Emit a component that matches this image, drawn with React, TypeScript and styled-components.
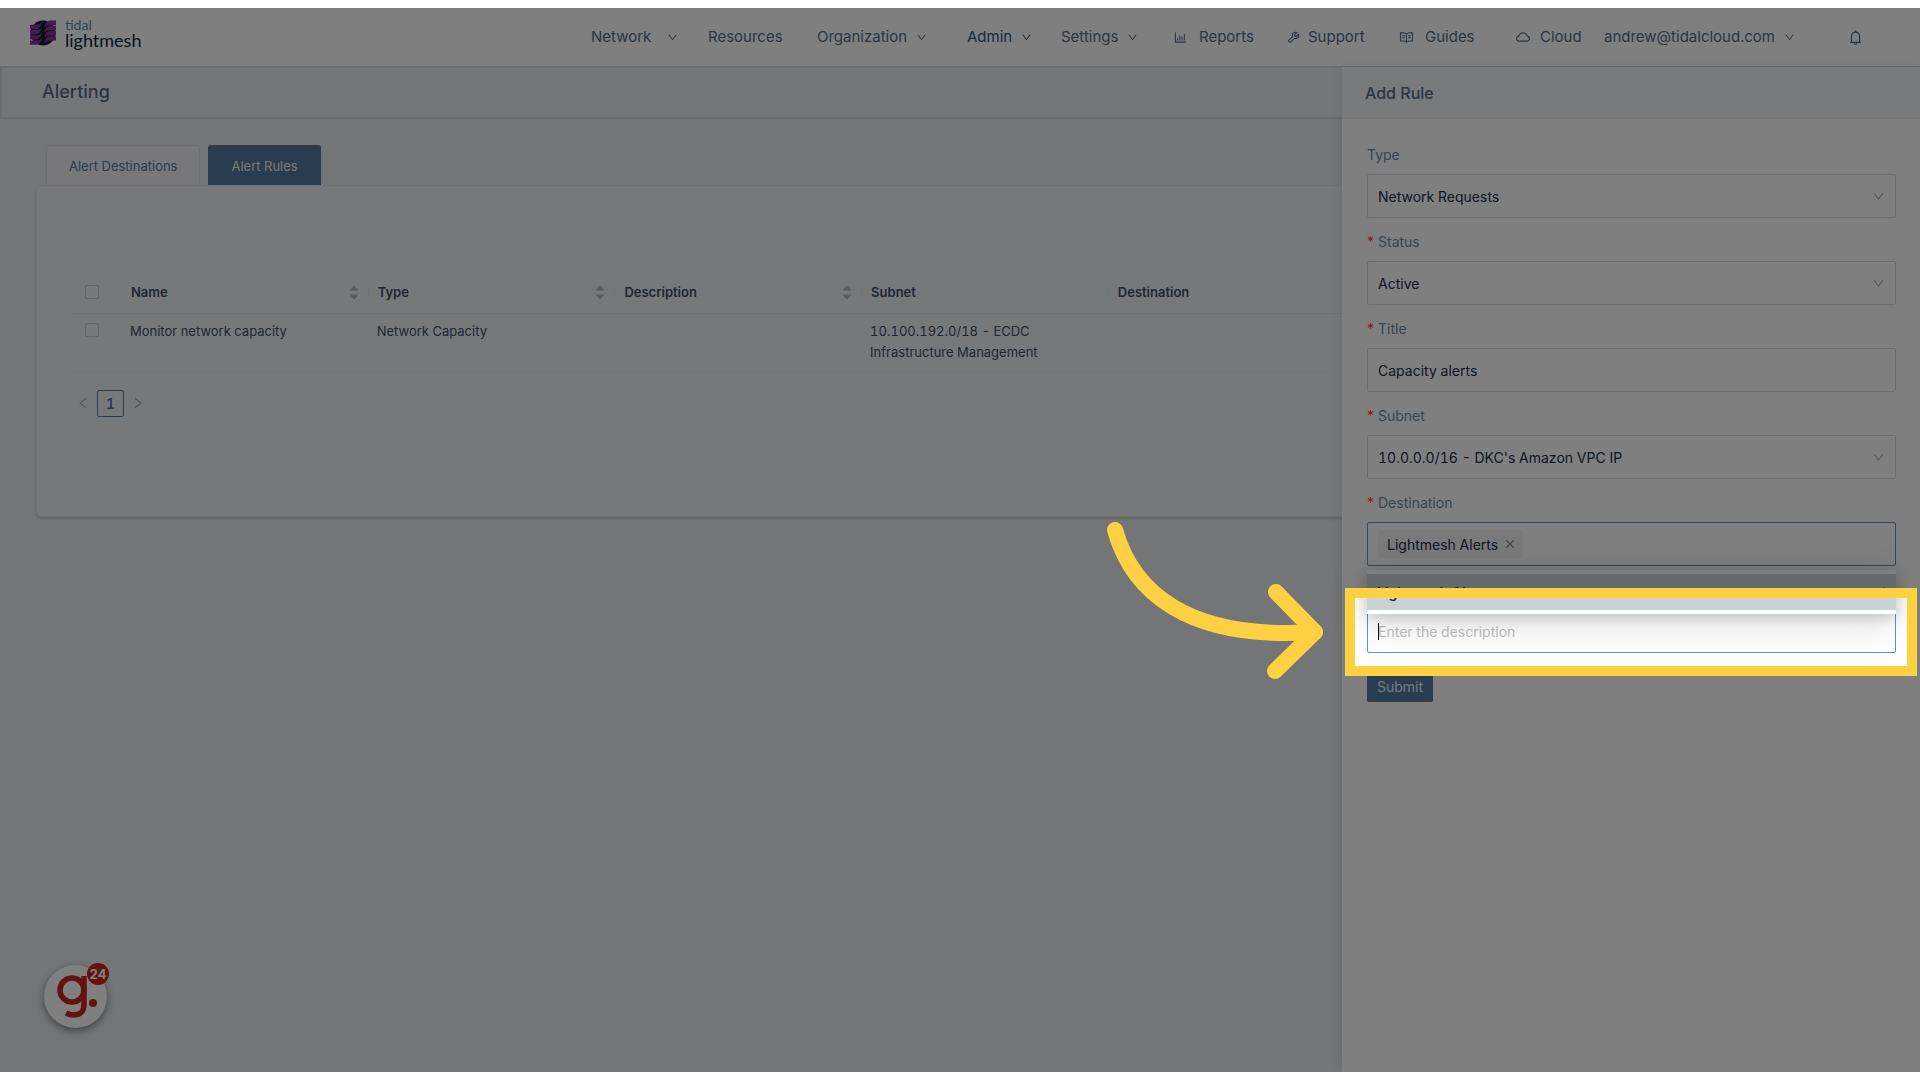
import React from 'react';
import styled, { createGlobalStyle } from 'styled-components';
import {
  AiFillCaretDown, AiFillCaretUp,
  AiOutlineBarChart, AiOutlineBell, AiOutlineCheck, AiOutlineClose, AiOutlineCloud,
  AiOutlineDown, AiOutlineLeft, AiOutlineRead, AiOutlineRight, AiOutlineTool,
} from 'react-icons/ai';

const sans = "Inter, 'Liberation Sans', sans-serif";
const color = {
  ink: '#1e2c44',
  slate: '#586b84',
  heading: '#5a6b85',
  label: '#7288a4',
  blue: '#54789f',
  line: '#d3dae3',
  accent: '#ffd142',
};

const GlobalStyle = createGlobalStyle`
  *, *::before, *::after { box-sizing: border-box; }
  body {
    margin: 0;
    background: #fff;
    font-family: ${sans};
    font-size: 14px;
    font-variant-numeric: tabular-nums;
    color: ${color.ink};
  }
  button, input, select { font: inherit; color: inherit; }
  a { color: inherit; text-decoration: none; }
`;

const Page = styled.div`
  min-height: 100vh;
  padding: 8px 0;
  display: flex;
`;

const Stage = styled.div`
  position: relative;
  flex: 1;
  min-width: 0;
  display: flex;
  flex-direction: column;
  overflow: hidden;
  background: #e9ebee;
`;

const Header = styled.header`
  height: 58px;
  padding: 0 56px 0 30px;
  display: flex;
  align-items: center;
  justify-content: space-between;
  background: #fff;
`;

const Brand = styled.a`
  padding-bottom: 8px;
  display: flex;
  align-items: center;
  gap: 9px;
`;

const BrandName = styled.span`
  display: flex;
  flex-direction: column;
  font-family: Lato, ${sans};
`;

const BrandTop = styled.span`
  font-size: 14px;
  line-height: 14px;
  color: #4a90ac;
`;

const BrandMain = styled.span`
  font-size: 18px;
  line-height: 16px;
  color: #10283a;
`;

const Nav = styled.nav`
  display: flex;
  align-items: center;
  font-size: 15px;
  line-height: 20px;
  color: ${color.slate};
`;

const NavItem = styled.a<{ $width: number; $active?: boolean; $gap?: number }>`
  width: ${p => p.$width}px;
  display: flex;
  align-items: center;
  gap: ${p => p.$gap ?? 9}px;
  white-space: nowrap;
  color: ${p => (p.$active ? '#2f547e' : 'inherit')};
`;

const Bell = styled.button`
  padding: 0;
  border: 0;
  background: none;
  display: flex;
  font-size: 17px;
`;

const TitleBar = styled.div`
  height: 53px;
  padding: 0 40px 2px;
  display: flex;
  align-items: center;
  border: 2px solid #d5d8e4;
  background: #ebedf0;
`;

const Title = styled.h1`
  margin: 0;
  font-size: 18px;
  line-height: 24px;
  font-weight: 500;
  color: ${color.heading};
`;

const Main = styled.main`
  padding: 26px 36px;
`;

const Tabs = styled.div`
  display: flex;
  gap: 8px;
  padding-left: 10px;
`;

const Tab = styled.button<{ $active?: boolean }>`
  height: 40px;
  padding: 0 22px;
  border: 1px solid ${p => (p.$active ? color.blue : '#d9dce1')};
  border-bottom: 0;
  border-radius: 3px 3px 0 0;
  background: ${p => (p.$active ? color.blue : '#f0f1f4')};
  color: ${p => (p.$active ? '#eef2f6' : color.blue)};
  font-size: 13px;
`;

const Card = styled.section`
  min-height: 332px;
  padding: 86px 34px 0;
  border: 1px solid #dfe1e4;
  border-radius: 6px;
  background: #eff0f3;
  box-shadow: 0 2px 3px rgba(0, 0, 0, 0.16);
`;

const Table = styled.table`
  width: 100%;
  table-layout: fixed;
  border-collapse: collapse;
  font-size: 13px;
  line-height: 21px;
  color: #3f4f68;
`;

const Th = styled.th`
  height: 41px;
  padding: 0 0 0 9px;
  text-align: left;
  font-weight: 600;
  border-bottom: 1px solid #e2e4e8;
`;

const CheckTh = styled(Th)`
  width: 51px;
  padding-left: 14px;
`;

const HeadCell = styled.div<{ $divided?: boolean }>`
  height: 14px;
  padding-right: 8px;
  display: flex;
  align-items: center;
  justify-content: space-between;
  border-right: ${p => (p.$divided ? '1px solid #e6e8eb' : '0')};
`;

const Sorter = styled.span`
  display: flex;
  flex-direction: column;
  font-size: 12px;
  color: #b3b5b9;
  svg { display: block; }
  svg + svg { margin-top: -3px; }
`;

const Td = styled.td`
  padding: 7px 40px 8px 8px;
  vertical-align: top;
  border-bottom: 1px solid #e9ebee;
`;

const CheckTd = styled(Td)`
  padding: 9px 0 0 14px;
`;

const Tick = styled.input`
  appearance: none;
  display: block;
  width: 14px;
  height: 14px;
  margin: 0;
  border: 1px solid #c6cad0;
  border-radius: 2px;
`;

const Pager = styled.nav`
  margin-top: 18px;
  padding-left: 5px;
  display: flex;
  align-items: center;
  gap: 7px;
  color: #a6a9af;
`;

const PageStep = styled.button`
  padding: 0;
  border: 0;
  background: none;
  display: flex;
  font-size: 14px;
`;

const PageNumber = styled.button`
  width: 27px;
  height: 27px;
  padding: 0;
  border: 1px solid ${color.blue};
  border-radius: 2px;
  background: none;
  color: ${color.blue};
  font-weight: 600;
`;

const Drawer = styled.aside`
  position: absolute;
  top: 59px;
  right: 0;
  bottom: 0;
  width: 578px;
  background: #fff;
  box-shadow: -3px 0 10px rgba(0, 0, 0, 0.08);
`;

const DrawerHead = styled.div`
  height: 52px;
  padding: 0 23px;
  display: flex;
  align-items: center;
  background: #f2f4f7;
  border-bottom: 1px solid #e6e9ed;
`;

const DrawerTitle = styled.h2`
  margin: 0;
  font-size: 16px;
  line-height: 24px;
  font-weight: 500;
  color: ${color.heading};
`;

const Form = styled.form`
  padding: 24px 24px 24px 25px;
`;

const Field = styled.div`
  position: relative;
  display: grid;
  grid-template-rows: 31px 44px;
  padding-bottom: 12px;
`;

const Label = styled.label`
  line-height: 24px;
  color: ${color.label};
`;

const Star = styled.span`
  margin-right: 4px;
  font-variant-numeric: normal;
  color: #f5403c;
`;

const Control = styled.div<{ $focus?: boolean }>`
  grid-row: 2;
  position: relative;
  padding: 0 10px;
  display: flex;
  align-items: center;
  border: 1px solid ${p => (p.$focus ? '#6d8fb3' : color.line)};
  border-radius: 2px;
  background: #fff;
`;

const Select = styled.select`
  appearance: none;
  flex: 1;
  min-width: 0;
  padding: 0;
  border: 0;
  background: none;
  outline: none;
`;

const TextInput = styled.input`
  flex: 1;
  min-width: 0;
  padding: 0;
  border: 0;
  background: none;
  outline: none;
  &::placeholder { color: #bfbfbf; opacity: 1; }
`;

const Arrow = styled(AiOutlineDown)`
  flex: none;
  color: #a9abaf;
  font-size: 13px;
`;

const Tag = styled.span`
  height: 28px;
  padding: 0 7px 0 9px;
  display: flex;
  align-items: center;
  gap: 6px;
  border-radius: 2px;
  background: #f4f4f5;
`;

const TagRemove = styled.button`
  padding: 0;
  border: 0;
  background: none;
  display: flex;
  font-size: 12px;
  color: #75787c;
`;

const Caret = styled.span`
  position: absolute;
  left: 10px;
  width: 1px;
  height: 17px;
  background: #111;
`;

const Dropdown = styled.div`
  position: absolute;
  z-index: 1;
  top: 79px;
  left: 0;
  right: 0;
  padding: 4px 0;
  background: #fff;
  box-shadow: 0 3px 16px rgba(0, 0, 0, 0.22), 0 9px 48px rgba(0, 0, 0, 0.12);
`;

const Option = styled.div`
  height: 36px;
  padding: 0 10px;
  display: flex;
  align-items: center;
  justify-content: space-between;
  background: #cad2d6;
  font-weight: 600;
`;

const Submit = styled.button`
  height: 32px;
  margin-top: 5px;
  padding: 0 10px;
  border: 0;
  border-radius: 2px;
  background: ${color.blue};
  color: #eef2f6;
`;

const Chat = styled.button`
  position: absolute;
  left: 44px;
  bottom: 44px;
  width: 63px;
  height: 63px;
  padding: 0;
  border: 0;
  border-radius: 50%;
  background: #fff;
  box-shadow: 0 3px 8px rgba(0, 0, 0, 0.45);
`;

const Count = styled.span`
  position: absolute;
  top: -2px;
  right: -2px;
  width: 22px;
  height: 22px;
  border-radius: 50%;
  background: #c7261a;
  color: #fff;
  font-size: 13px;
  line-height: 22px;
  font-weight: 700;
`;

/* The frame shades everything on the stage outside its own box. */
const Spotlight = styled.div`
  position: absolute;
  z-index: 3;
  top: 580px;
  right: 3px;
  width: 572px;
  height: 88px;
  border: 10px solid ${color.accent};
  box-shadow: 0 0 0 3000px rgba(0, 0, 0, 0.5);
  pointer-events: none;
`;

const Pointer = styled.svg`
  position: absolute;
  z-index: 4;
  top: 510px;
  right: 590px;
  width: 230px;
  height: 170px;
  pointer-events: none;
`;

const Logo = () => (
  <svg width="26" height="26" viewBox="0 0 26 26" aria-hidden="true">
    <circle cx="13" cy="13" r="12.5" fill="#0c1c30" />
    <g fill="#8d35a0">
      {[0.5, 5.8, 11, 16.2].map(y => (
        <React.Fragment key={y}>
          <path d={`M26 ${y}v4.400h-5c-4 0-5 1-7 3 1-5 3-7.400 7-7.400z`} />
          <path d={`M0 ${y + 4.2}h6c3 0 4-.5 6-3-1 5-3 7.400-7 7.400H0z`} />
        </React.Fragment>
      ))}
    </g>
  </svg>
);

const columns = [
  { title: 'Name', sortable: true },
  { title: 'Type', sortable: true },
  { title: 'Description', sortable: true },
  { title: 'Subnet', sortable: false },
  { title: 'Destination', sortable: false },
  { title: '', sortable: false },
  { title: '', sortable: false },
];
const row = ['Monitor network capacity', 'Network Capacity', '', '10.100.192.0/18 - ECDC Infrastructure Management', '', '', ''];

const SelectField = ({ id, label, value, required }: { id: string; label: string; value: string; required?: boolean }) => (
  <Field>
    <Label htmlFor={id}>{required && <Star>*</Star>}{label}</Label>
    <Control>
      <Select id={id} defaultValue={value}><option>{value}</option></Select>
      <Arrow />
    </Control>
  </Field>
);

export default function App() {
  return (
    <Page>
      <GlobalStyle />
      <Stage>
        <Header>
          <Brand href="#">
            <Logo />
            <BrandName>
              <BrandTop>tidal</BrandTop>
              <BrandMain>lightmesh</BrandMain>
            </BrandName>
          </Brand>
          <Nav>
            <NavItem href="#" $width={117} $gap={16}>Network <AiOutlineDown size={11} /></NavItem>
            <NavItem href="#" $width={109}>Resources</NavItem>
            <NavItem href="#" $width={150}>Organization <AiOutlineDown size={11} /></NavItem>
            <NavItem href="#" $width={94} $active>Admin <AiOutlineDown size={11} /></NavItem>
            <NavItem href="#" $width={112}>Settings <AiOutlineDown size={11} /></NavItem>
            <NavItem href="#" $width={113} $gap={11}><AiOutlineBarChart size={15} /> Reports</NavItem>
            <NavItem href="#" $width={113} $gap={7}><AiOutlineTool size={15} /> Support</NavItem>
            <NavItem href="#" $width={116} $gap={11}><AiOutlineRead size={15} /> Guides</NavItem>
            <NavItem href="#" $width={89}><AiOutlineCloud size={16} /> Cloud</NavItem>
            <NavItem href="#" $width={243}>andrew@tidalcloud.com <AiOutlineDown size={11} /></NavItem>
            <Bell type="button" aria-label="Notifications"><AiOutlineBell /></Bell>
          </Nav>
        </Header>
        <TitleBar><Title>Alerting</Title></TitleBar>
        <Main>
          <Tabs>
            <Tab type="button">Alert Destinations</Tab>
            <Tab type="button" $active>Alert Rules</Tab>
          </Tabs>
          <Card>
            <Table>
              <thead>
                <tr>
                  <CheckTh><Tick type="checkbox" aria-label="Select all rules" /></CheckTh>
                  {columns.map((c, i) => (
                    <Th key={i}>
                      <HeadCell $divided={i < 4}>
                        {c.title}
                        {c.sortable && <Sorter><AiFillCaretUp /><AiFillCaretDown /></Sorter>}
                      </HeadCell>
                    </Th>
                  ))}
                </tr>
              </thead>
              <tbody>
                <tr>
                  <CheckTd><Tick type="checkbox" aria-label="Select rule" /></CheckTd>
                  {row.map((text, i) => <Td key={i}>{text}</Td>)}
                </tr>
              </tbody>
            </Table>
            <Pager aria-label="Pages">
              <PageStep type="button" aria-label="Previous"><AiOutlineLeft /></PageStep>
              <PageNumber type="button">1</PageNumber>
              <PageStep type="button" aria-label="Next"><AiOutlineRight /></PageStep>
            </Pager>
          </Card>
        </Main>

        <Drawer>
          <DrawerHead><DrawerTitle>Add Rule</DrawerTitle></DrawerHead>
          <Form>
            <SelectField id="type" label="Type" value="Network Requests" />
            <SelectField id="status" label="Status" value="Active" required />
            <Field>
              <Label htmlFor="title"><Star>*</Star>Title</Label>
              <Control><TextInput id="title" defaultValue="Capacity alerts" /></Control>
            </Field>
            <SelectField id="subnet" label="Subnet" value="10.0.0.0/16 - DKC's Amazon VPC IP" required />
            <Field>
              <Label htmlFor="destination"><Star>*</Star>Destination</Label>
              <Control $focus>
                <Tag>Lightmesh Alerts <TagRemove type="button" aria-label="Remove"><AiOutlineClose /></TagRemove></Tag>
                <TextInput id="destination" />
              </Control>
              <Dropdown role="listbox">
                <Option role="option" aria-selected="true">Lightmesh Alerts <AiOutlineCheck size={14} /></Option>
              </Dropdown>
            </Field>
            <Field>
              <Control $focus>
                <TextInput aria-label="Description" placeholder="Enter the description" />
                <Caret />
              </Control>
            </Field>
            <Submit type="button">Submit</Submit>
          </Form>
        </Drawer>

        <Chat type="button" aria-label="Help">
          <svg width="63" height="63" viewBox="0 0 63 63" fill="none" stroke="#c7261a" strokeWidth="5.500">
            <circle cx="28" cy="25" r="12" />
            <path d="M40 11v28c0 8-4 11-11 11-3 0-5-1-7-2" />
            <circle cx="49" cy="38" r="4" fill="#c7261a" stroke="none" />
          </svg>
          <Count>24</Count>
        </Chat>

        <Spotlight />
        <Pointer viewBox="0 0 230 170" fill="none" stroke={color.accent} strokeWidth="16" strokeLinecap="round" strokeLinejoin="round">
          <path d="M15 12C32 72 85 123 215 114" />
          <path d="M176 74L215 114L175 153" />
        </Pointer>
      </Stage>
    </Page>
  );
}
